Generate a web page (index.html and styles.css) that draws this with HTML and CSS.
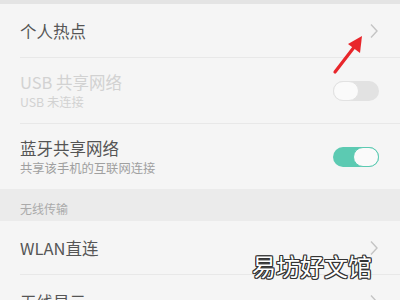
FILE: index.html
```html
<!DOCTYPE html>
<html lang="zh">
<head>
    <meta charset="UTF-8">
    <title>其他共享与连接</title>
    <link rel="stylesheet" href="styles.css">
</head>
<body>
    <div class="top-band"></div>

    <div class="row row-single">
        <span class="row-title">个人热点</span>
        <svg class="chevron" width="10" height="16" viewBox="0 0 10 16"><path d="M2 1.5 L8 8 L2 14.5" fill="none" stroke="#c4c4c4" stroke-width="1.4"/></svg>
    </div>
    <div class="divider"></div>

    <div class="row row-double disabled">
        <div class="row-text">
            <span class="row-title">USB 共享网络</span>
            <span class="row-sub">USB 未连接</span>
        </div>
        <div class="toggle"><span class="knob"></span></div>
    </div>
    <div class="divider"></div>

    <div class="row row-double">
        <div class="row-text">
            <span class="row-title">蓝牙共享网络</span>
            <span class="row-sub">共享该手机的互联网连接</span>
        </div>
        <div class="toggle on"><span class="knob"></span></div>
    </div>

    <div class="section-head">无线传输</div>

    <div class="row row-single">
        <span class="row-title">WLAN直连</span>
        <svg class="chevron" width="10" height="16" viewBox="0 0 10 16"><path d="M2 1.5 L8 8 L2 14.5" fill="none" stroke="#c4c4c4" stroke-width="1.4"/></svg>
    </div>
    <div class="divider"></div>

    <div class="row row-single">
        <span class="row-title">无线显示</span>
        <svg class="chevron" width="10" height="16" viewBox="0 0 10 16"><path d="M2 1.5 L8 8 L2 14.5" fill="none" stroke="#c4c4c4" stroke-width="1.4"/></svg>
    </div>

    <!-- 标注箭头 -->
    <svg class="arrow" width="40" height="44" viewBox="0 0 40 44">
        <path d="M4 40 L24 14" stroke="#e8262b" stroke-width="3.2" stroke-linecap="round"/>
        <path d="M31 4 L17 12 L29 21 Z" fill="#e8262b"/>
    </svg>

    <div class="watermark">易坊好文馆</div>
</body>
</html>
```

FILE: styles.css
```css
body {
    margin: 0;
    background: #f5f5f5;
    font-family: "Noto Sans CJK SC", "Noto Sans", sans-serif;
    position: relative;
    height: 300px;
    overflow: hidden;
}

.top-band {
    height: 4px;
    background: #e4e4e4;
}

.row {
    display: flex;
    align-items: center;
    justify-content: space-between;
    padding: 0 21px 0 20px;
}

.row-single {
    height: 53px;
}

.row-double {
    height: 65px;
}

.row-text {
    display: flex;
    flex-direction: column;
    gap: 1px;
}

.row-title {
    font-size: 16.5px;
    color: #555;
    line-height: 22px;
}

.row-sub {
    font-size: 12.3px;
    color: #a0a0a0;
    line-height: 16px;
}

.disabled .row-title,
.disabled .row-sub {
    color: #d2d2d2;
}

.divider {
    height: 1px;
    background: #e8e8e8;
    margin-left: 20px;
}

.toggle {
    width: 46px;
    height: 20px;
    border-radius: 10px;
    background: #e2e2e2;
    position: relative;
}

.knob {
    position: absolute;
    top: 0;
    left: 0;
    width: 26px;
    height: 20px;
    box-sizing: border-box;
    border-radius: 10px;
    background: #fafafa;
    border: 1px solid #e2e2e2;
}

.toggle.on {
    background: #5ccab2;
}

.toggle.on .knob {
    left: auto;
    right: 0;
    border: 1.5px solid #5ccab2;
}

.section-head {
    height: 32px;
    box-sizing: border-box;
    padding: 13px 0 0 20px;
    background: #ebebeb;
    font-size: 12px;
    line-height: 14px;
    color: #aaa;
}

.arrow {
    position: absolute;
    left: 331px;
    top: 32px;
}

.watermark {
    position: absolute;
    left: 252px;
    top: 250px;
    font-size: 24px;
    line-height: 32px;
    color: #fff;
    text-shadow: 1px 0 #333, -1px 0 #333, 0 1px #333, 0 -1px #333,
                 1px 1px #333, -1px -1px #333, 1px -1px #333, -1px 1px #333;
}
```
